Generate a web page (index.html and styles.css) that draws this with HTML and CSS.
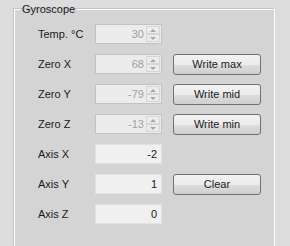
FILE: index.html
```html
<!DOCTYPE html>
<html lang="en">
<head>
    <meta charset="UTF-8">
    <title>Gyroscope</title>
    <link rel="stylesheet" href="styles.css">
</head>
<body>
    <fieldset class="grupo">
        <legend>Gyroscope</legend>
        <div class="filas">
            <span class="etiqueta">Temp. °C</span>
            <div class="spin"><span class="valor">30</span><span class="flechas"><i class="arriba"></i><i class="abajo"></i></span></div>
            <span></span>

            <span class="etiqueta">Zero X</span>
            <div class="spin"><span class="valor">68</span><span class="flechas"><i class="arriba"></i><i class="abajo"></i></span></div>
            <button class="boton">Write max</button>

            <span class="etiqueta">Zero Y</span>
            <div class="spin"><span class="valor">-79</span><span class="flechas"><i class="arriba"></i><i class="abajo"></i></span></div>
            <button class="boton">Write mid</button>

            <span class="etiqueta">Zero Z</span>
            <div class="spin"><span class="valor">-13</span><span class="flechas"><i class="arriba"></i><i class="abajo"></i></span></div>
            <button class="boton">Write min</button>

            <span class="etiqueta">Axis X</span>
            <div class="caja">-2</div>
            <span></span>

            <span class="etiqueta">Axis Y</span>
            <div class="caja">1</div>
            <button class="boton">Clear</button>

            <span class="etiqueta">Axis Z</span>
            <div class="caja">0</div>
            <span></span>
        </div>
    </fieldset>
</body>
</html>
```

FILE: styles.css
```css
* {
    font-family: 'Liberation Sans', Arial, sans-serif;
    box-sizing: border-box;
}
body {
    margin: 0;
    width: 290px;
    height: 246px;
    overflow: hidden;
    background-color: #dcdcdc;
}
.grupo {
    margin: 3px 0 0 14px;
    padding: 0;
    width: 261px;
    height: 250px;
    border: 1px solid #fff;
    box-shadow: -1px -1px 0 #c4c4c4;
    background-color: #d4d4d4;
}
.grupo legend {
    margin-left: 5px;
    padding: 0 2px;
    font-size: 11px;
    line-height: 13px;
    color: #1a1a1a;
}
.filas {
    display: grid;
    grid-template-columns: 57px 67px 99px;
    grid-auto-rows: 20px;
    row-gap: 10px;
    padding: 8px 0 0 23px;
    align-items: center;
}
.etiqueta {
    font-size: 11px;
    color: #1a1a1a;
}
.spin {
    display: flex;
    height: 20px;
    border: 1px solid #c2c2c2;
    background-color: #ececec;
}
.valor {
    flex: 1;
    text-align: right;
    font-size: 11px;
    line-height: 18px;
    padding-right: 2px;
    color: #a0a0a0;
}
.flechas {
    width: 15px;
    display: flex;
    flex-direction: column;
    padding: 1px 1px 1px 0;
}
.flechas i {
    flex: 1;
    position: relative;
    border: 1px solid #d6d6d6;
    background-color: #ececec;
}
.flechas i::after {
    content: '';
    position: absolute;
    left: 3px;
    top: 2px;
    border-left: 3px solid transparent;
    border-right: 3px solid transparent;
}
.arriba::after {
    border-bottom: 3px solid #a8a8a8;
}
.abajo::after {
    border-top: 3px solid #a8a8a8;
}
.caja {
    height: 20px;
    border: 1px solid #e2e2e2;
    background-color: #f0f0f0;
    text-align: right;
    font-size: 11px;
    line-height: 18px;
    padding-right: 4px;
    color: #1a1a1a;
}
.boton {
    width: 88px;
    height: 21px;
    margin: 0 0 0 11px;
    padding: 0;
    border: 1px solid #707070;
    border-radius: 3px;
    font-size: 11px;
    color: #1a1a1a;
    background: linear-gradient(#f2f2f2, #ebebeb 50%, #dddddd 51%, #cfcfcf);
}
```
